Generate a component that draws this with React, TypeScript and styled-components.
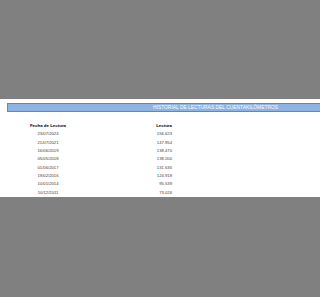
import styled, { createGlobalStyle } from 'styled-components';

const GlobalStyle = createGlobalStyle`
  html, body {
    margin: 0;
    padding: 0;
    background: #808080;
    font-family: "Liberation Sans", Arial, sans-serif;
  }
`;

export const Page = styled.div`
  width: 320px;
  height: 297px;
  background: #808080;
  padding-top: 99px;
  box-sizing: border-box;
`;
export const Sheet = styled.div`
  background: #ffffff;
  height: 98px;
  padding-top: 4px;
  box-sizing: border-box;
`;
export const Banner = styled.div`
  margin-left: 7px;
  height: 9px;
  background: #8db4e2;
  border: 1px solid #6a86a8;
  border-right: none;
  box-sizing: border-box;
  padding-left: 145px;
  color: #ffffff;
  font-size: 4.9px;
  line-height: 7px;
  white-space: nowrap;
  text-transform: uppercase;
`;
export const Table = styled.div`
  margin-top: 10px;
  padding-left: 28px;
`;
export const Row = styled.div<{ head?: boolean }>`
  display: flex;
  height: 8.35px;
  line-height: 8.35px;
  font-size: ${(p) => (p.head ? '4.4px' : '4.2px')};
  font-weight: ${(p) => (p.head ? 700 : 400)};
  color: ${(p) => (p.head ? '#000000' : '#3a3a3a')};
  white-space: nowrap;
`;
export const DateCell = styled.div`
  width: 40px;
  text-align: center;
`;
export const ValueCell = styled.div`
  width: 104px;
  text-align: right;
`;

const lecturas = [
  ['23/07/2024', '156.623'],
  ['21/07/2021', '147.954'],
  ['16/06/2019', '138.470'],
  ['05/05/2018', '138.200'],
  ['01/06/2017', '131.635'],
  ['19/02/2016', '124.918'],
  ['10/01/2014', '95.539'],
  ['10/12/2011', '73.026'],
];

export default function App(): JSX.Element {
  return (
    <Page>
      <GlobalStyle />
      <Sheet>
        <Banner>Historial de lecturas del cuentakilómetros</Banner>
        <Table>
          <Row head>
            <DateCell>Fecha de Lectura</DateCell>
            <ValueCell>Lectura</ValueCell>
          </Row>
          {lecturas.map(([fecha, km]) => (
            <Row key={fecha}>
              <DateCell>{fecha}</DateCell>
              <ValueCell>{km}</ValueCell>
            </Row>
          ))}
        </Table>
      </Sheet>
    </Page>
  );
}
